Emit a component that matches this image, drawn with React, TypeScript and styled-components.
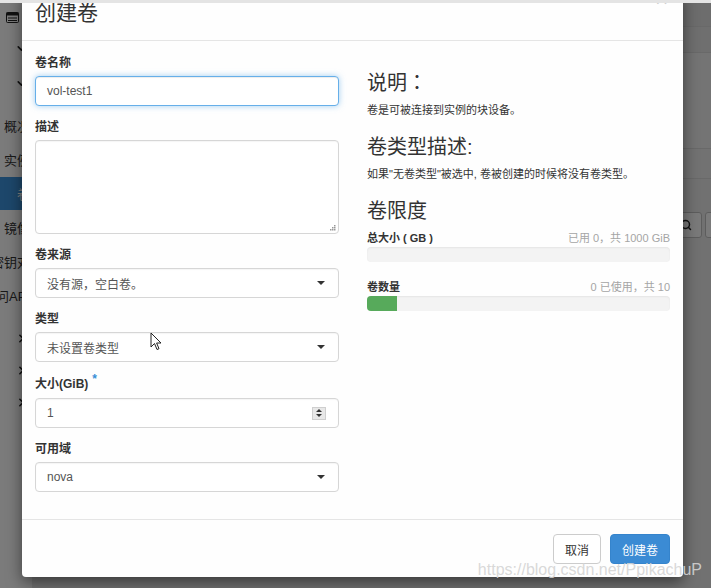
import React from "react";
import styled, { createGlobalStyle } from "styled-components";
import { ChevronDown, ChevronRight, Search } from "lucide-react";

const GlobalStyle = createGlobalStyle`
  html, body { margin: 0; padding: 0; }
  body {
    font-family: "Liberation Sans", "Noto Sans CJK SC", sans-serif;
    color: #333;
  }
  * { box-sizing: border-box; }
`;

const Screen = styled.div`
  position: relative;
  width: 711px;
  height: 588px;
  overflow: hidden;
  background: #e6e6e6;
`;

const TopEdge = styled.div`
  position: absolute;
  top: 0;
  left: 0;
  right: 0;
  height: 3px;
  background: #e4e4e4;
  z-index: 5;
`;

// — page behind the dialog —
const Page = styled.div`
  display: flex;
  height: 100%;
  padding-top: 3px;
`;

const Sidebar = styled.nav`
  width: 32px;
  flex-shrink: 0;
  background: #f6f6f6;
  display: flex;
  flex-direction: column;
`;

const Brand = styled.div`
  height: 28px;
  display: flex;
  align-items: center;
  padding-left: 6px;
  color: #222;
`;

const NavGroup = styled.div<{ $gap: number }>`
  display: flex;
  flex-direction: column;
  margin-top: ${({ $gap }) => $gap}px;
`;

const NavHead = styled.div<{ $h: number }>`
  height: ${({ $h }) => $h}px;
  display: flex;
  align-items: center;
  padding-left: 15px;
  color: #222;
`;

const NavItem = styled.div<{ $active?: boolean }>`
  display: flex;
  align-items: center;
  justify-content: flex-end;
  padding-right: 2px;
  white-space: nowrap;
  font-size: 13px;
  color: ${({ $active }) => ($active ? "#fff" : "#333")};
  background: ${({ $active }) => ($active ? "#3a8fd6" : "transparent")};
  margin-top: ${({ $active }) => ($active ? "1px" : "0")};
  height: ${({ $active }) => ($active ? "33px" : "34px")};
`;

const Main = styled.main`
  flex: 1;
  display: flex;
  flex-direction: column;
  background: #e2e2e2;
`;

const MainBar = styled.div<{ $h: number; $bg: string }>`
  height: ${({ $h }) => $h}px;
  background: ${({ $bg }) => $bg};
  border-bottom: 1px solid #d2d2d2;
`;

const Toolbar = styled.div`
  display: flex;
  justify-content: flex-end;
  gap: 3px;
  margin: 33px -30px 0 0;
`;

const ToolButton = styled.div<{ $w: number }>`
  width: ${({ $w }) => $w}px;
  height: 26px;
  border: 1px solid #bbb;
  border-radius: 3px;
  background: #f4f4f4;
  display: flex;
  align-items: center;
  justify-content: center;
  color: #222;
`;

const Backdrop = styled.div`
  position: absolute;
  inset: 0;
  background: rgba(0, 0, 0, 0.5);
`;

// — the dialog —
const Modal = styled.div`
  position: absolute;
  left: 22px;
  top: -10px;
  width: 661px;
  background: #fefefe;
  border-radius: 4px;
  box-shadow: 0 5px 15px rgba(0, 0, 0, 0.5);
`;

const Header = styled.div`
  display: flex;
  justify-content: space-between;
  align-items: flex-start;
  padding: 11px 13px 16px;
  border-bottom: 1px solid #e5e5e5;
`;

const Title = styled.h4`
  margin: 0;
  font-size: 21px;
  line-height: 23px;
  font-weight: normal;
  color: #333;
`;

const Close = styled.span`
  font-size: 22px;
  line-height: 22px;
  font-weight: bold;
  color: #000;
  opacity: 0.2;
  margin-top: -13px;
  margin-right: 2px;
`;

const Body = styled.div`
  display: grid;
  grid-template-columns: 304px 1fr;
  column-gap: 28px;
  padding: 14px 13px 14px;
`;

const Column = styled.div`
  display: flex;
  flex-direction: column;
`;

const Group = styled.div`
  display: flex;
  flex-direction: column;
  margin-bottom: 13px;
`;

const Label = styled.label<{ $tall?: boolean }>`
  display: block;
  height: ${({ $tall }) => ($tall ? "19px" : "17px")};
  font-size: 12px;
  line-height: ${({ $tall }) => ($tall ? "19px" : "17px")};
  font-weight: bold;
  color: #333;
  margin-bottom: 4px;
`;

const Required = styled.span`
  position: relative;
  top: -5px;
  line-height: 0;
  color: #3a8fd6;
  font-size: 12px;
  margin-left: 4px;
`;

const Field = styled.div<{ $focus?: boolean; $h?: number }>`
  position: relative;
  height: ${({ $h }) => $h ?? 30}px;
  border: 1px solid ${({ $focus }) => ($focus ? "#66afe9" : "#d6d6d6")};
  border-radius: 4px;
  background: #fff;
  box-shadow: ${({ $focus }) =>
    $focus
      ? "inset 0 1px 1px rgba(0,0,0,.075), 0 0 6px rgba(102,175,233,.6)"
      : "inset 0 1px 1px rgba(0,0,0,.04)"};
  display: flex;
  align-items: center;
  padding: 0 13px 0 11px;
  font-size: 12px;
  color: #555;
`;

const FieldText = styled.span`
  flex: 1;
`;

const Caret = styled.span`
  width: 0;
  height: 0;
  border-left: 4px solid transparent;
  border-right: 4px solid transparent;
  border-top: 4px solid #333;
`;

const Spinner = styled.span`
  width: 14px;
  height: 13px;
  display: flex;
  flex-direction: column;
  align-items: center;
  justify-content: center;
  gap: 2px;
  background: #e8e8e8;
  border: 1px solid #cfcfcf;
  margin-right: -1px;
`;

const SpinArrow = styled.span<{ $up?: boolean }>`
  width: 0;
  height: 0;
  border-left: 3px solid transparent;
  border-right: 3px solid transparent;
  ${({ $up }) =>
    $up ? "border-bottom: 3px solid #333;" : "border-top: 3px solid #333;"}
`;

const Grip = styled.svg`
  position: absolute;
  right: 2px;
  bottom: 2px;
`;

const Heading = styled.h3<{ $first?: boolean }>`
  margin: ${({ $first }) => ($first ? "16px" : "18px")} 0 8px;
  font-size: 20px;
  line-height: 22px;
  font-weight: normal;
  color: #333;
`;

const Punct = styled.span`
  font-family: "Noto Sans CJK TC", sans-serif;
`;

const Text = styled.p`
  margin: 0;
  font-size: 11px;
  line-height: 16px;
  color: #333;
`;

const QuotaHead = styled.div`
  display: flex;
  justify-content: space-between;
  font-size: 11px;
  line-height: 16px;
  margin-bottom: 1px;
`;

const QuotaLabel = styled.span`
  font-weight: bold;
  color: #333;
`;

const QuotaUsage = styled.span`
  color: #a5a5a5;
`;

const Progress = styled.div<{ $mb?: number }>`
  height: 15px;
  border-radius: 4px;
  background: #f3f3f3;
  box-shadow: inset 0 1px 2px rgba(0, 0, 0, 0.06);
  overflow: hidden;
  margin-bottom: ${({ $mb }) => $mb ?? 0}px;
`;

const Bar = styled.div`
  height: 100%;
  background: #57aa5b;
`;

const Footer = styled.div`
  display: flex;
  justify-content: flex-end;
  gap: 9px;
  padding: 14px 13px 13px;
  border-top: 1px solid #e5e5e5;
`;

const Button = styled.button<{ $primary?: boolean }>`
  height: 30px;
  padding: 0 11px;
  border-radius: 4px;
  font-family: inherit;
  font-size: 12px;
  border: 1px solid ${({ $primary }) => ($primary ? "#3584cc" : "#ccc")};
  background: ${({ $primary }) => ($primary ? "#3b8bd4" : "#fff")};
  color: ${({ $primary }) => ($primary ? "#fff" : "#333")};
`;

const Cursor = styled.svg`
  position: absolute;
  left: 150px;
  top: 332px;
`;

const Watermark = styled.div`
  position: absolute;
  right: 9px;
  bottom: 9px;
  font-size: 16px;
  color: rgba(212, 212, 212, 0.9);
  font-family: "Liberation Sans", sans-serif;
`;

const navItems = ["概况", "实例", "卷", "镜像", "密钥对", "访问API"];

const App: React.FC = () => {
  return (
    <Screen>
      <GlobalStyle />
      <Page>
        <Sidebar>
          <Brand>
            <svg width="13" height="11" viewBox="0 0 13 11">
              <rect x="0.5" y="0.5" width="12" height="10" rx="1" fill="none" stroke="#222" />
              <rect x="0.5" y="0.5" width="12" height="3" fill="#222" />
              <line x1="2" y1="6" x2="11" y2="6" stroke="#222" />
              <line x1="2" y1="8.5" x2="11" y2="8.5" stroke="#222" />
            </svg>
          </Brand>
          <NavHead $h={34}>
            <ChevronDown size={13} strokeWidth={3} />
          </NavHead>
          <NavHead $h={36}>
            <ChevronDown size={13} strokeWidth={3} />
          </NavHead>
          <NavGroup $gap={7}>
            {navItems.map((t) => (
              <NavItem key={t} $active={t === "卷"}>
                {t}
              </NavItem>
            ))}
          </NavGroup>
          <NavGroup $gap={10}>
            {[0, 1, 2].map((i) => (
              <NavHead key={i} $h={32}>
                <ChevronRight size={13} strokeWidth={3} />
              </NavHead>
            ))}
          </NavGroup>
        </Sidebar>
        <Main>
          <MainBar $h={24} $bg="#dadada" />
          <MainBar $h={26} $bg="#dedede" />
          <MainBar $h={96} $bg="#e9e9e9" />
          <MainBar $h={30} $bg="#e4e4e4" />
          <Toolbar>
            <ToolButton $w={32}>
              <Search size={12} strokeWidth={3} />
            </ToolButton>
            <ToolButton $w={36} />
          </Toolbar>
        </Main>
      </Page>

      <Backdrop />

      <Modal>
        <Header>
          <Title>创建卷</Title>
          <Close>×</Close>
        </Header>

        <Body>
          <Column>
            <Group>
              <Label>卷名称</Label>
              <Field $focus>
                <FieldText>vol-test1</FieldText>
              </Field>
            </Group>
            <Group>
              <Label>描述</Label>
              <Field $h={94}>
                <Grip width="8" height="8" viewBox="0 0 8 8">
                  <rect x="6" y="2" width="1.5" height="1.5" fill="#999" />
                  <rect x="4" y="4" width="1.5" height="1.5" fill="#999" />
                  <rect x="6" y="4" width="1.5" height="1.5" fill="#999" />
                  <rect x="2" y="6" width="1.5" height="1.5" fill="#999" />
                  <rect x="4" y="6" width="1.5" height="1.5" fill="#999" />
                  <rect x="6" y="6" width="1.5" height="1.5" fill="#999" />
                </Grip>
              </Field>
            </Group>
            <Group>
              <Label>卷来源</Label>
              <Field>
                <FieldText>没有源，空白卷。</FieldText>
                <Caret />
              </Field>
            </Group>
            <Group>
              <Label>类型</Label>
              <Field>
                <FieldText>未设置卷类型</FieldText>
                <Caret />
              </Field>
            </Group>
            <Group>
              <Label $tall>
                大小(GiB)
                <Required>*</Required>
              </Label>
              <Field>
                <FieldText>1</FieldText>
                <Spinner>
                  <SpinArrow $up />
                  <SpinArrow />
                </Spinner>
              </Field>
            </Group>
            <Group>
              <Label>可用域</Label>
              <Field>
                <FieldText>nova</FieldText>
                <Caret />
              </Field>
            </Group>
          </Column>

          <Column>
            <Heading $first>
              说明<Punct>：</Punct>
            </Heading>
            <Text>卷是可被连接到实例的块设备。</Text>
            <Heading>卷类型描述:</Heading>
            <Text>如果"无卷类型"被选中, 卷被创建的时候将没有卷类型。</Text>
            <Heading>卷限度</Heading>
            <QuotaHead>
              <QuotaLabel>总大小 ( GB )</QuotaLabel>
              <QuotaUsage>已用 0，共 1000 GiB</QuotaUsage>
            </QuotaHead>
            <Progress $mb={17} />
            <QuotaHead>
              <QuotaLabel>卷数量</QuotaLabel>
              <QuotaUsage>0 已使用，共 10</QuotaUsage>
            </QuotaHead>
            <Progress>
              <Bar style={{ width: `${(1 / 10) * 100}%` }} />
            </Progress>
          </Column>
        </Body>

        <Footer>
          <Button>取消</Button>
          <Button $primary>创建卷</Button>
        </Footer>
      </Modal>

      <Cursor width="12" height="19" viewBox="0 0 12 19">
        <path d="M1 1 L1 15 L4.5 11.5 L7 17.5 L9 16.7 L6.6 11 L11 11 Z" fill="#fff" stroke="#222" strokeWidth="1" strokeLinejoin="round" />
      </Cursor>

      <TopEdge />
      <Watermark>https://blog.csdn.net/PpikachuP</Watermark>
    </Screen>
  );
};

export default App;
